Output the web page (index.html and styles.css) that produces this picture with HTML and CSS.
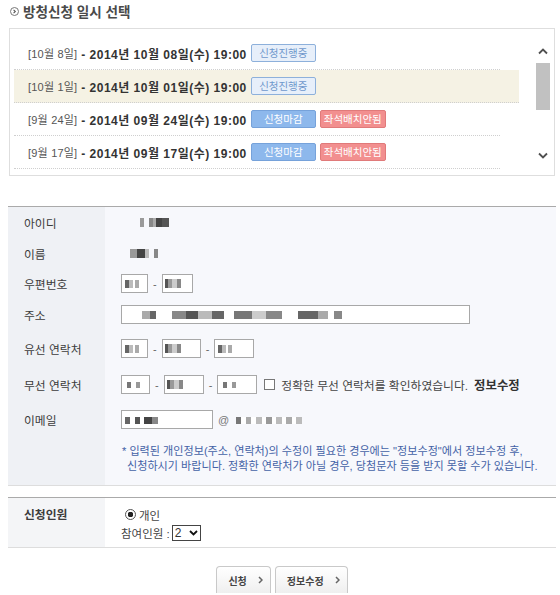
FILE: index.html
```html
<!DOCTYPE html>
<html lang="ko">

<head>
    <meta charset="UTF-8" />
    <title>방청신청</title>
    <link rel="stylesheet" href="styles.css">
</head>

<body>
    <div class="page">
        <h2 class="title">
            <svg class="bullet" width="9" height="9" viewBox="0 0 9 9">
                <circle cx="4.5" cy="4.5" r="4" fill="none" stroke="#777" stroke-width="1" />
                <polyline points="3.6,2.8 5.3,4.5 3.6,6.2" fill="none" stroke="#555" stroke-width="1.1" />
            </svg>
            방청신청 일시 선택
        </h2>

        <div class="schedule">
            <ul class="sched-list">
                <li class="sched-row">
                    <span class="day">[10월 8일]</span>
                    <b class="date">&nbsp;- 2014년 10월 08일(수) 19:00</b>
                    <span class="tag tag-open">신청진행중</span>
                </li>
                <li class="sched-row selected">
                    <span class="day">[10월 1일]</span>
                    <b class="date">&nbsp;- 2014년 10월 01일(수) 19:00</b>
                    <span class="tag tag-open">신청진행중</span>
                </li>
                <li class="sched-row">
                    <span class="day">[9월 24일]</span>
                    <b class="date">&nbsp;- 2014년 09월 24일(수) 19:00</b>
                    <span class="tag tag-closed">신청마감</span>
                    <span class="tag tag-seat">좌석배치안됨</span>
                </li>
                <li class="sched-row">
                    <span class="day">[9월 17일]</span>
                    <b class="date">&nbsp;- 2014년 09월 17일(수) 19:00</b>
                    <span class="tag tag-closed">신청마감</span>
                    <span class="tag tag-seat">좌석배치안됨</span>
                </li>
            </ul>
            <div class="scrollbar">
                <div class="sb-btn">
                    <svg width="10" height="7" viewBox="0 0 10 7">
                        <polyline points="1,5.5 5,1.5 9,5.5" fill="none" stroke="#505050" stroke-width="1.8" />
                    </svg>
                </div>
                <div class="track">
                    <div class="thumb"></div>
                </div>
                <div class="sb-btn">
                    <svg width="10" height="7" viewBox="0 0 10 7">
                        <polyline points="1,1.5 5,5.5 9,1.5" fill="none" stroke="#505050" stroke-width="1.8" />
                    </svg>
                </div>
            </div>
        </div>

        <div class="info">
            <div class="field h30">
                <div class="field-label">아이디</div>
                <div class="field-value"><span class="mz mz-id"></span></div>
            </div>
            <div class="field h32">
                <div class="field-label">이름</div>
                <div class="field-value"><span class="mz mz-name"></span></div>
            </div>
            <div class="field h29">
                <div class="field-label">우편번호</div>
                <div class="field-value">
                    <input class="inp w27 mzi-a" type="text" />
                    <span class="dash">-</span>
                    <input class="inp w31 mzi-b" type="text" />
                </div>
            </div>
            <div class="field h33">
                <div class="field-label">주소</div>
                <div class="field-value">
                    <input class="inp w349 mzi-addr" type="text" />
                </div>
            </div>
            <div class="field h35">
                <div class="field-label">유선 연락처</div>
                <div class="field-value">
                    <input class="inp w27 mzi-a" type="text" />
                    <span class="dash">-</span>
                    <input class="inp w39 mzi-b" type="text" />
                    <span class="dash">-</span>
                    <input class="inp w40 mzi-a" type="text" />
                </div>
            </div>
            <div class="field h37">
                <div class="field-label">무선 연락처</div>
                <div class="field-value">
                    <input class="inp w29 mzi-c" type="text" />
                    <span class="dash">-</span>
                    <input class="inp w40 mzi-b" type="text" />
                    <span class="dash">-</span>
                    <input class="inp w40 mzi-c" type="text" />
                    <label class="confirm">
                        <input class="check" type="checkbox" />
                        정확한 무선 연락처를 확인하였습니다.
                        <b class="edit-link">정보수정</b>
                    </label>
                </div>
            </div>
            <div class="field h33">
                <div class="field-label">이메일</div>
                <div class="field-value">
                    <input class="inp w92 mzi-mail" type="text" />
                    <span class="at">@</span>
                    <input class="inp inp-bare w72 mzi-domain" type="text" />
                </div>
            </div>
            <div class="field h50">
                <div class="field-label"></div>
                <div class="field-value note">
                    * 입력된 개인정보(주소, 연락처)의 수정이 필요한 경우에는 "정보수정"에서 정보수정 후,<br />
                    신청하시기 바랍니다. 정확한 연락처가 아닐 경우, 당첨문자 등을 받지 못할 수가 있습니다.
                </div>
            </div>
        </div>

        <div class="info info-apply">
            <div class="field h50">
                <div class="field-label label-top">신청인원</div>
                <div class="field-value value-stack">
                    <label class="radio-line">
                        <input class="radio" type="radio" name="type" checked />
                        개인
                    </label>
                    <div class="count-line">
                        참여인원 :
                        <span class="select">2
                            <svg width="9" height="6" viewBox="0 0 9 6">
                                <polyline points="1,1 4.5,4.5 8,1" fill="none" stroke="#111" stroke-width="1.8" />
                            </svg>
                        </span>
                    </div>
                </div>
            </div>
        </div>

        <div class="actions">
            <button type="button" class="btn">신청
                <svg width="5" height="8" viewBox="0 0 5 8">
                    <polyline points="1,1 4,4 1,7" fill="none" stroke="#666" stroke-width="1.5" />
                </svg>
            </button>
            <button type="button" class="btn">정보수정
                <svg width="5" height="8" viewBox="0 0 5 8">
                    <polyline points="1,1 4,4 1,7" fill="none" stroke="#666" stroke-width="1.5" />
                </svg>
            </button>
        </div>
    </div>
</body>

</html>
```

FILE: styles.css
```css
* {
    box-sizing: border-box;
}

body {
    margin: 0;
    background: #fff;
    color: #444;
    font-family: "Liberation Sans", "Noto Sans CJK KR", sans-serif;
}

.page {
    width: 560px;
    padding: 0 4px 0 8px;
}

/* 제목 */
.title {
    margin: 0 0 6px 0;
    height: 22px;
    display: flex;
    align-items: center;
    gap: 4px;
    font-size: 13.6px;
    font-weight: bold;
    color: #4a4a4a;
}

.bullet {
    margin-left: 2px;
}

/* 일시 목록 */
.schedule {
    margin-left: 1px;
    width: 546px;
    height: 148px;
    border: 1px solid #dedede;
    display: flex;
}

.sched-list {
    list-style: none;
    margin: 0;
    padding: 8px 0 0 4px;
    flex: 1;
}

.sched-row {
    width: 486px;
    height: 33px;
    padding-left: 14px;
    border-bottom: 1px dotted #cfcfcf;
    display: flex;
    align-items: center;
    white-space: nowrap;
    font-size: 12px;
}

.sched-row.selected {
    width: 505px;
    background-color: #f5f2e4;
}

.day {
    color: #555;
    font-size: 11px;
    letter-spacing: 0.2px;
}

.date {
    color: #333;
    letter-spacing: 0.5px;
}

.tag {
    margin-left: 4px;
    width: 65px;
    height: 18px;
    border: 1px solid;
    border-radius: 2px;
    text-align: center;
    font-size: 10.5px;
    line-height: 16px;
}

.tag-open {
    background-color: #e7effa;
    border-color: #8db0db;
    color: #6f98cc;
}

.tag-closed {
    background-color: #8db8ec;
    border-color: #76a2da;
    color: #fff;
}

.tag-seat {
    width: 66px;
    background-color: #f28f8f;
    border-color: #e07a7a;
    color: #fff;
}

.scrollbar {
    width: 14px;
    margin: 11px 4px 0 0;
    display: flex;
    flex-direction: column;
}

.sb-btn {
    height: 23px;
    display: flex;
    align-items: center;
    justify-content: center;
}

.track {
    height: 81px;
}

.thumb {
    height: 47px;
    background-color: #c1c1c1;
}

/* 회원 정보 */
.info {
    margin-top: 30px;
    width: 548px;
    border-top: 1px solid #aaa;
    border-bottom: 1px solid #ddd;
    background-color: #f7f8fc;
}

.info-apply {
    margin-top: 11px;
    background-color: #fff;
}

.field {
    display: flex;
}

.h29 { height: 29px; }
.h30 { height: 30px; }
.h32 { height: 32px; }
.h33 { height: 33px; }
.h35 { height: 35px; }
.h37 { height: 37px; }
.h50 { height: 49px; }

.field-label {
    width: 97px;
    padding-left: 16px;
    display: flex;
    align-items: center;
    background-color: #eff1f5;
    font-size: 11.8px;
    color: #3c3c3c;
}

.info-apply .field-label {
    background-color: #f4f5f7;
}

.label-top {
    align-items: flex-start;
    padding-top: 7px;
    font-weight: bold;
}

.field-value {
    flex: 1;
    padding-left: 16px;
    display: flex;
    align-items: center;
    font-size: 11px;
    color: #444;
}

.inp {
    height: 19px;
    padding: 0;
    border: 1px solid #a8a8a8;
    background-color: #fff;
    background-repeat: no-repeat;
}

.inp-bare {
    border-color: transparent;
    background-color: transparent;
}

.w27 { width: 27px; }
.w29 { width: 29px; }
.w31 { width: 31px; }
.w39 { width: 39px; }
.w40 { width: 40px; }
.w72 { width: 72px; }
.w92 { width: 92px; }
.w349 { width: 349px; }

.dash {
    margin: 0 5px;
    color: #666;
}

.at {
    margin: 0 6px 0 5px;
    color: #777;
}

/* 모자이크 처리된 개인정보 */
.mz {
    display: inline-block;
    height: 9px;
}

.mz-id {
    margin-left: 12px;
    width: 36px;
    background: linear-gradient(90deg, transparent 0 20%, #9a9a9a 20% 30%, transparent 30% 45%, #888 45% 55%, #aaa 55% 65%, #444 65% 80%, #555 80% 100%);
}

.mz-name {
    margin-left: 9px;
    width: 30px;
    background: linear-gradient(90deg, #999 0 25%, #444 25% 50%, #bbb 50% 62%, transparent 62% 80%, #888 80% 92%, transparent 92%);
}

.mzi-a {
    background-image: linear-gradient(90deg, #666 0 4px, #bbb 4px 8px, #fff 8px 10px, #aaa 10px 14px);
    background-position: 3px 5px;
    background-size: 14px 8px;
}

.mzi-b {
    background-image: linear-gradient(90deg, #555 0 3px, #999 3px 7px, #ccc 7px 12px, #888 12px 16px);
    background-position: 2px 4px;
    background-size: 16px 9px;
}

.mzi-c {
    background-image: linear-gradient(90deg, #777 0 4px, #fff 4px 9px, #999 9px 13px);
    background-position: 5px 6px;
    background-size: 13px 6px;
}

.mzi-addr {
    background-image: linear-gradient(90deg, #aaa 0 8px, #666 8px 14px, #fff 14px 30px, #888 30px 44px, #555 44px 56px, #bbb 56px 70px, #666 70px 82px, #fff 82px 92px, #777 92px 110px, #ccc 110px 124px, #888 124px 140px, #fff 140px 156px, #666 156px 176px, #aaa 176px 186px, #fff 186px 192px, #888 192px 200px);
    background-position: 20px 5px;
    background-size: 200px 8px;
}

.mzi-mail {
    background-image: linear-gradient(90deg, #666 0 5px, #fff 5px 10px, #555 10px 15px, #fff 15px 19px, #444 19px 27px, #888 27px 33px);
    background-position: 3px 6px;
    background-size: 33px 7px;
}

.mzi-domain {
    background-image: linear-gradient(90deg, #777 0 5px, #fff 5px 10px, #aaa 10px 15px, #fff 15px 20px, #bbb 20px 26px, #fff 26px 30px, #999 30px 36px, #fff 36px 40px, #bbb 40px 46px, #fff 46px 50px, #aaa 50px 56px, #fff 56px 60px, #bbb 60px 66px);
    background-position: 0 6px;
    background-size: 66px 7px;
}

.confirm {
    margin-left: 7px;
    display: flex;
    align-items: center;
    gap: 6px;
    white-space: nowrap;
    font-size: 11.8px;
    color: #444;
}

.check {
    appearance: none;
    margin: 0;
    width: 11px;
    height: 11px;
    border: 1px solid #777;
    background: #fff;
}

.edit-link {
    color: #333;
    font-size: 12.4px;
}

.note {
    padding-top: 8px;
    padding-left: 22px;
    text-indent: -5px;
    display: block;
    font-size: 11.1px;
    line-height: 15px;
    color: #4462a6;
    white-space: nowrap;
}

/* 신청인원 */
.value-stack {
    flex-direction: column;
    align-items: flex-start;
    padding-top: 9px;
}

.radio-line {
    margin-left: 4px;
    height: 15px;
    display: flex;
    align-items: center;
    gap: 3px;
    font-size: 11.5px;
}

.radio {
    appearance: none;
    margin: 0;
    width: 11px;
    height: 11px;
    border: 1px solid #555;
    border-radius: 50%;
    background: radial-gradient(circle, #222 0 2.6px, #fff 3px);
}

.count-line {
    margin-top: 3px;
    display: flex;
    align-items: center;
    gap: 2px;
    font-size: 11.5px;
}

.select {
    width: 29px;
    height: 16px;
    padding: 0 2px;
    border: 1px solid #444;
    background-color: #fff;
    display: flex;
    align-items: center;
    justify-content: space-between;
    font-size: 12px;
    color: #333;
}

/* 버튼 */
.actions {
    margin-top: 18px;
    width: 548px;
    display: flex;
    justify-content: center;
    gap: 4px;
}

.btn {
    height: 27px;
    padding: 0 7px 0 11px;
    border: 1px solid #c9c9c9;
    border-bottom: none;
    border-radius: 4px 4px 0 0;
    background: linear-gradient(#fff, #efefef);
    display: flex;
    align-items: center;
    gap: 11px;
    font-family: "Liberation Sans", "Noto Sans CJK KR", sans-serif;
    font-size: 10px;
    font-weight: bold;
    color: #444;
}
```
